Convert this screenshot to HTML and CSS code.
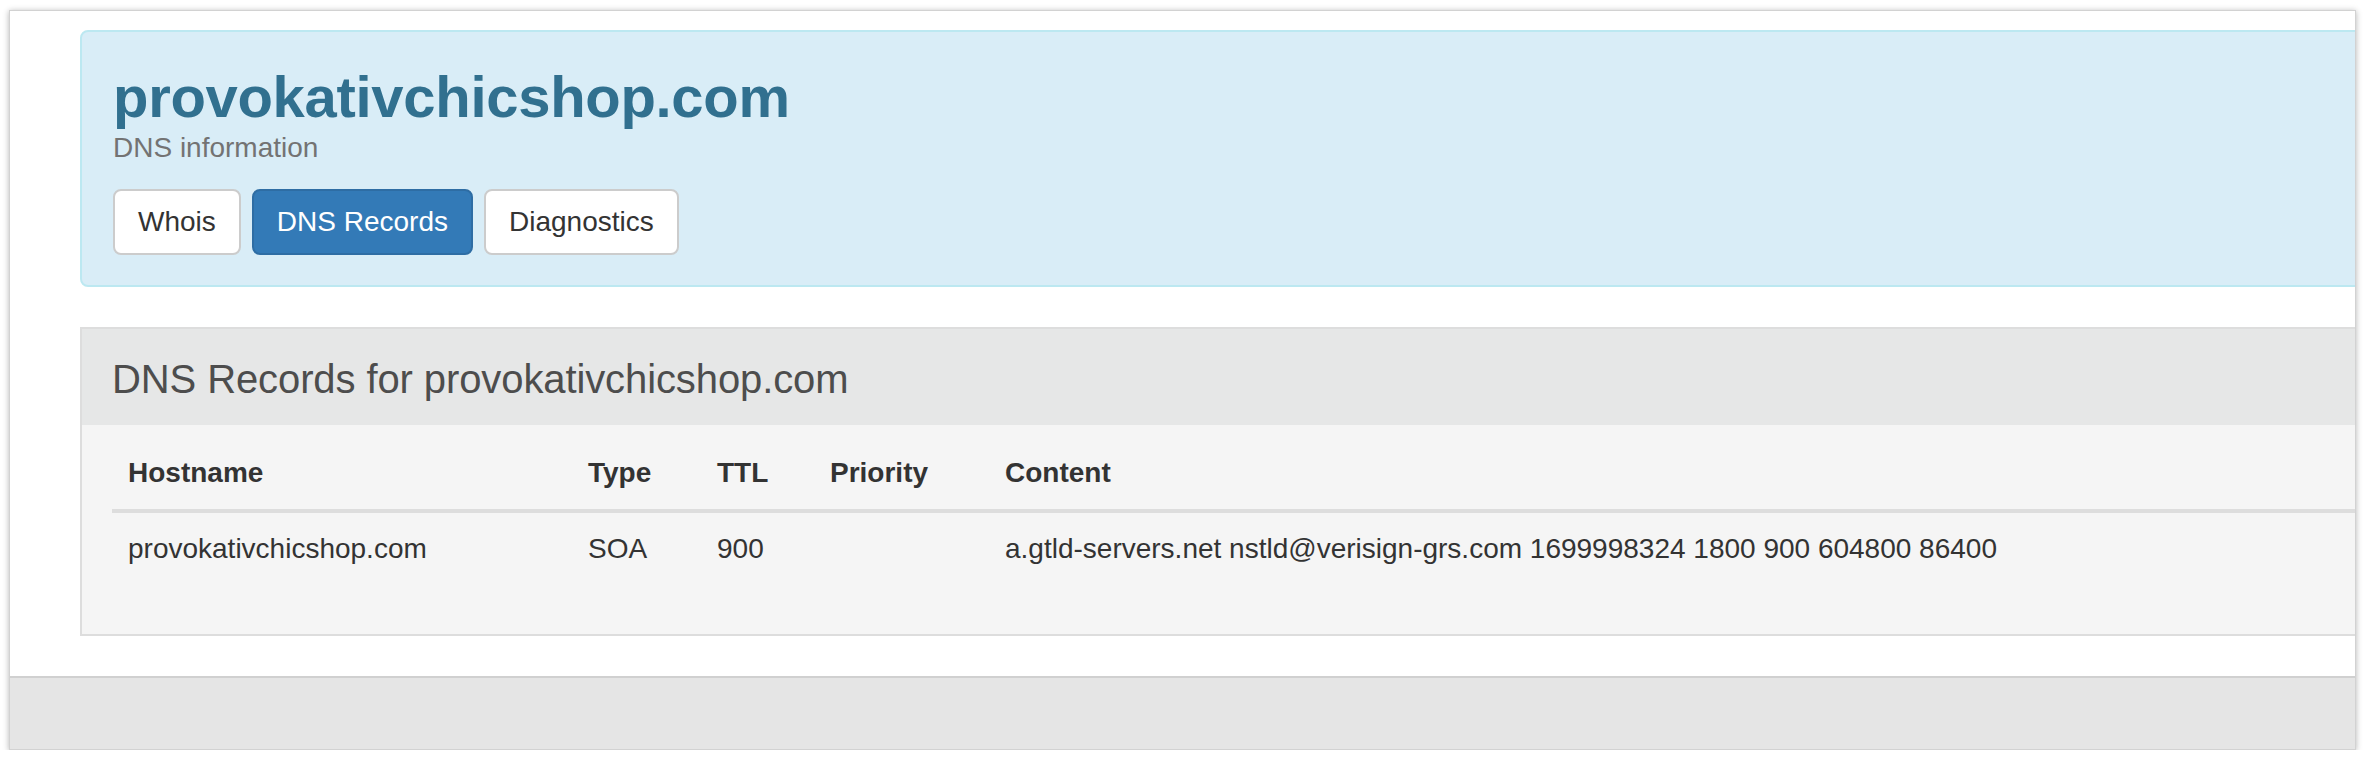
FILE: index.html
```html
<!DOCTYPE html>
<html lang="en">
<head>
<meta charset="utf-8">
<title>provokativchicshop.com - DNS Records</title>
<link rel="stylesheet" href="styles.css">
</head>
<body>
<div class="frame">
  <div class="content">
    <div class="hero">
      <h1 class="hero-title">provokativchicshop.com</h1>
      <p class="hero-sub">DNS information</p>
      <div class="tabs">
        <a class="btn">Whois</a>
        <a class="btn btn-active">DNS Records</a>
        <a class="btn">Diagnostics</a>
      </div>
    </div>
    <div class="panel">
      <div class="panel-heading">DNS Records for provokativchicshop.com</div>
      <div class="panel-body">
        <table class="records">
          <thead>
            <tr>
              <th class="c-host">Hostname</th>
              <th class="c-type">Type</th>
              <th class="c-ttl">TTL</th>
              <th class="c-prio">Priority</th>
              <th class="c-content">Content</th>
            </tr>
          </thead>
          <tbody>
            <tr>
              <td>provokativchicshop.com</td>
              <td>SOA</td>
              <td>900</td>
              <td></td>
              <td>a.gtld-servers.net nstld@verisign-grs.com 1699998324 1800 900 604800 86400</td>
            </tr>
          </tbody>
        </table>
      </div>
    </div>
  </div>
  <div class="footer"></div>
</div>
</body>
</html>
```
FILE: styles.css
```css
html, body {
  margin: 0;
  padding: 0;
  background: #ffffff;
}
body {
  font-family: "Liberation Sans", Arial, Helvetica, sans-serif;
  color: #333333;
  padding: 10px 0 0 9px;
}
.frame {
  width: 2345px;
  height: 738px;
  border: 1px solid #d2d2d2;
  background: #ffffff;
  box-shadow: 0 1px 6px rgba(0, 0, 0, 0.3);
  overflow: hidden;
  display: flex;
  flex-direction: column;
}
.content {
  padding: 19px 0 0 70px;
  width: 2320px;
  flex: none;
}
.hero {
  background: #d9edf7;
  border: 2px solid #bce8f1;
  border-radius: 8px;
  padding: 30px 31px;
}
.hero-title {
  margin: 0;
  font-size: 58px;
  line-height: 69px;
  font-weight: bold;
  color: #31708f;
  letter-spacing: -0.3px;
}
.hero-sub {
  margin: 0;
  font-size: 28px;
  line-height: 34px;
  color: #737373;
}
.tabs {
  margin-top: 24px;
  display: flex;
  gap: 11px;
}
.btn {
  display: block;
  font-size: 28px;
  line-height: 40px;
  padding: 11px 23px;
  border: 2px solid #cccccc;
  border-radius: 8px;
  background: #ffffff;
  color: #333333;
}
.btn-active {
  background: #337ab7;
  border-color: #2e6da4;
  color: #ffffff;
}
.panel {
  margin-top: 40px;
  border: 2px solid #dddddd;
  border-right: none;
  background: #f5f5f5;
}
.panel-heading {
  background: #e6e7e7;
  padding: 28px 30px 24px 30px;
  font-size: 40px;
  line-height: 44px;
  color: #4d4d4d;
  letter-spacing: -0.1px;
}
.panel-body {
  padding: 12px 0 49px 30px;
}
.records {
  width: 100%;
  border-collapse: collapse;
  font-size: 28px;
  line-height: 40px;
}
.records th,
.records td {
  text-align: left;
  padding: 16px;
  vertical-align: top;
}
.records th {
  font-weight: bold;
  border-bottom: 4px solid #dddddd;
}
.c-host { width: 428px; }
.c-type { width: 97px; }
.c-ttl { width: 81px; }
.c-prio { width: 143px; }
.footer {
  margin-top: 40px;
  flex: 1;
  background: #e5e5e5;
  border-top: 2px solid #d0d0d0;
}
```
